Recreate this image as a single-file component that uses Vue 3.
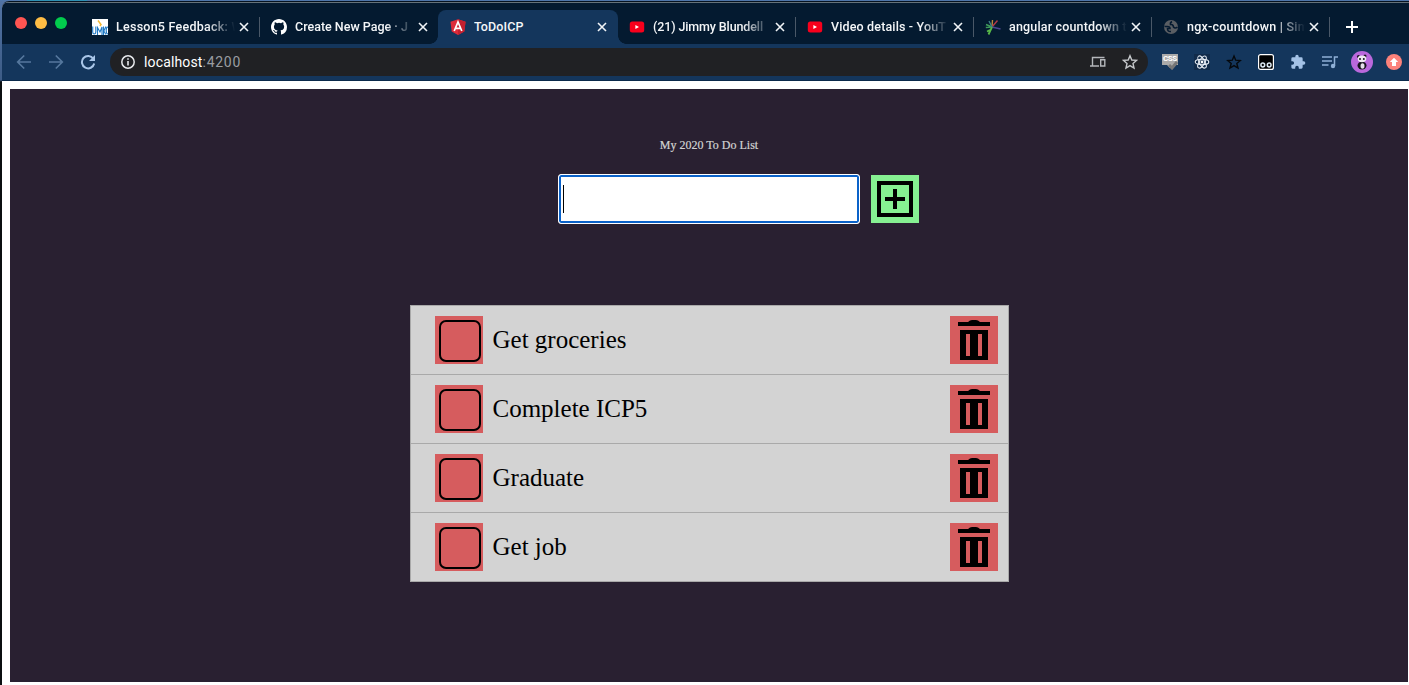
<script setup>
const tabs = [
  { id: 'umkc', title: 'Lesson5 Feedback: W', w: 179, track: 0.25 },
  { id: 'github', title: 'Create New Page · J', w: 178, track: 0 },
  { id: 'angular', title: 'ToDoICP', w: 180, track: 0.1, active: true },
  { id: 'youtube', title: '(21) Jimmy Blundell', w: 178, track: -0.12 },
  { id: 'youtube', title: 'Video details - YouT', w: 178, track: 0.15 },
  { id: 'burst', title: 'angular countdown t', w: 178, track: 0.17 },
  { id: 'globe', title: 'ngx-countdown | Sim', w: 178, track: 0.22 },
]
const items = ['Get groceries', 'Complete ICP5', 'Graduate', 'Get job']
</script>

<template>
  <div class="screen">
    <div class="desktop-edge"><i></i></div>
    <div class="window">
      <div class="tabstrip">
        <div class="lights"><i class="red"></i><i class="yellow"></i><i class="green"></i></div>
        <div v-for="(t, i) in tabs" :key="i" class="tab" :class="{ active: t.active, divided: !t.active && i !== 1 }" :style="{ width: t.w + 'px' }">
          <svg class="fav" width="16" height="16" viewBox="0 0 16 16">
            <g v-if="t.id === 'umkc'" fill="none">
              <path d="M0 0H16V16H0Z" fill="#fff" />
              <path d="M.7 7.500V13q0 2 1.500 2T3.800 13V7.500M5.500 16V8.500L8 13L10 8V16M11.500 7.500V16M14 7.500L11.800 12L14 15.500M16 8q-1.800 0-1.800 3.500t1.800 3.500" stroke="#1e78c4" stroke-width="1.100" />
              <path d="M6 1.500L9 5.500L8 7" stroke="#f2b632" stroke-width="1.500" />
            </g>
            <path v-else-if="t.id === 'github'" fill="#fff" d="M8 0C3.580 0 0 3.580 0 8c0 3.540 2.290 6.530 5.470 7.590.4.070.550-.170.550-.380v-1.490c-2.010.370-2.530-.490-2.690-.940-.090-.230-.480-.940-.820-1.130-.280-.150-.680-.520-.010-.530.630-.010 1.080.580 1.230.820.720 1.210 1.870.870 2.330.660.070-.520.280-.870.510-1.070-1.780-.2-3.640-.890-3.640-3.950 0-.870.310-1.590.820-2.150-.080-.2-.360-1.020.080-2.120 0 0 .670-.210 2.200.820a7.600 7.600 0 0 1 4 0c1.530-1.040 2.200-.820 2.200-.820.440 1.100.160 1.920.080 2.120.510.560.820 1.270.820 2.150 0 3.070-1.870 3.750-3.650 3.950.290.250.540.730.540 1.480v2.200c0 .210.150.460.550.380A8 8 0 0 0 16 8c0-4.420-3.580-8-8-8z" />
            <g v-else-if="t.id === 'angular'">
              <path d="M8 .2L15.500 2.800L14.300 12.500L8 16L1.700 12.500L.5 2.800Z" fill="#dd2b3a" />
              <path d="M8 .2L15.500 2.800L14.300 12.500L8 16Z" fill="#c3202f" />
              <path d="M4.200 12L8 3L11.800 12M5.500 9.300H10.500" fill="none" stroke="#fff" stroke-width="1.700" />
            </g>
            <g v-else-if="t.id === 'youtube'">
              <rect x=".8" y="2.500" width="14.400" height="11" rx="2.500" fill="#f8001c" />
              <path d="M6.400 6L10 8L6.400 10Z" fill="#fff" />
            </g>
            <g v-else-if="t.id === 'burst'" fill="none" stroke-width="1.400">
              <path d="M7 8L1 5.500M7 8L.8 8.500" stroke="#3f9c5a" />
              <path d="M7 8L7.500 1" stroke="#b8863a" />
              <path d="M7 8L12.500 1.500" stroke="#b53a48" />
              <path d="M7 8L15.500 10" stroke="#4b4590" />
              <path d="M7 8L3.500 15.500M5 11L2 12.500" stroke="#58b848" stroke-width="1.800" />
              <path d="M7 8L4 2" stroke="#3c7f86" />
            </g>
            <g v-else>
              <circle cx="8" cy="8" r="7" fill="#5a5e63" />
              <path d="M1.500 7.500H4.500Q7 7.500 7 9.500H4.500Q4.500 13 8 12.500M9 2.500Q7 3.500 7.500 5.500Q10 5 10.500 8Q12 10 14.500 8" fill="none" stroke="#051a30" stroke-width="1.600" />
            </g>
          </svg>
          <span class="title" :class="{ faded: !t.active }" :style="{ letterSpacing: t.track + 'px' }">{{ t.title }}</span>
          <svg class="close" width="10" height="10" viewBox="0 0 10 10"><path d="M1 1L9 9M9 1L1 9" stroke="#f1f4f7" stroke-width="1.600" /></svg>
        </div>
        <svg class="newtab" width="12" height="12" viewBox="0 0 12 12"><path d="M6 0V12M0 6H12" stroke="#fff" stroke-width="2" /></svg>
      </div>

      <div class="toolbar">
        <div class="nav">
          <svg width="16" height="16" viewBox="0 0 16 16" fill="none" stroke="#55779d" stroke-width="1.700"><path d="M15 8H2M8.200 1.500L1.700 8L8.200 14.500" /></svg>
          <svg width="16" height="16" viewBox="0 0 16 16" fill="none" stroke="#55779d" stroke-width="1.700"><path d="M1 8H14M7.800 1.500L14.300 8L7.800 14.500" /></svg>
          <svg width="16" height="16" viewBox="0 0 16 16"><path d="M13.300 4.700A6.200 6.200 0 1 0 14.200 9.500" fill="none" stroke="#a9c6e8" stroke-width="2" /><path d="M15 1V7H9Z" fill="#a9c6e8" /></svg>
        </div>
        <div class="omnibox">
          <svg width="14" height="14" viewBox="0 0 14 14"><circle cx="7" cy="7" r="6.200" fill="none" stroke="#e8eaed" stroke-width="1.500" /><path d="M7 6V10.500M7 3.200V4.800" stroke="#e8eaed" stroke-width="1.600" /></svg>
          <span class="url">localhost<em>:4200</em></span>
          <svg class="devices" width="16" height="12" viewBox="0 0 16 12" fill="none" stroke="#b4b7bb" stroke-width="1.400"><path d="M14.500 1.500H2.500V9.500M0 10H9M10.700 3.700H14.800V10H10.700Z" /></svg>
          <svg width="16" height="16" viewBox="0 0 16 16"><path d="M8 1.700L9.800 6L14.500 6.400L11 9.500L12 14L8 11.600L4 14L5 9.500L1.500 6.400L6.200 6Z" fill="none" stroke="#c4c7ca" stroke-width="1.400" /></svg>
        </div>
        <div class="exts">
          <div class="css"><svg width="16" height="16" viewBox="0 0 16 16"><path d="M0 0H16V11H13L8 14L5 11H0Z" fill="#aaa" /><path d="M7 11L10 14L15 8" fill="none" stroke="#777" stroke-width="3" /></svg><b>CSS</b></div>
          <svg width="16" height="16" viewBox="0 0 16 16"><path d="M0 0H16V16H0Z" fill="#112b4a" /><g fill="none" stroke="#e8eef5" stroke-width="1.100"><ellipse cx="8" cy="8" rx="6.800" ry="2.700" /><ellipse cx="8" cy="8" rx="6.800" ry="2.700" transform="rotate(60 8 8)" /><ellipse cx="8" cy="8" rx="6.800" ry="2.700" transform="rotate(120 8 8)" /></g><circle cx="8" cy="8" r="1.400" fill="#fff" /></svg>
          <svg width="16" height="16" viewBox="0 0 16 16"><path d="M8 2L9.700 6.200L14.300 6.600L10.800 9.500L12 14L8 11.600L4 14L5.200 9.500L1.700 6.600L6.300 6.200Z" fill="none" stroke="#05080c" stroke-width="1.400" /></svg>
          <svg width="16" height="16" viewBox="0 0 16 16"><rect x=".6" y=".6" width="14.800" height="14.800" rx="2" fill="#000" stroke="#fff" stroke-width="1.200" /><g fill="#000" stroke="#dce9f2" stroke-width="1.500"><circle cx="4.800" cy="11" r="1.900" /><circle cx="11.200" cy="11" r="1.900" /></g></svg>
          <svg width="16" height="16" viewBox="0 0 24 24"><path fill="#a4c2e6" d="M20.500 11H19V7a2 2 0 0 0-2-2h-4V3.500a2.500 2.500 0 0 0-5 0V5H4a2 2 0 0 0-2 2v3.800h1.500a2.700 2.700 0 0 1 0 5.400H2V20a2 2 0 0 0 2 2h3.800v-1.500a2.700 2.700 0 0 1 5.400 0V22H17a2 2 0 0 0 2-2v-4h1.500a2.500 2.500 0 0 0 0-5z" /></svg>
          <svg width="16" height="16" viewBox="0 0 16 16"><path d="M0 3H10M0 7H10M0 11H6.500M12.500 12V3H16" fill="none" stroke="#8fb0d6" stroke-width="1.500" /><circle cx="11" cy="12" r="2.200" fill="#8fb0d6" /></svg>
          <svg class="avatar" width="22" height="22" viewBox="0 0 22 22"><circle cx="11" cy="11" r="11" fill="#ba68dc" /><ellipse cx="11" cy="14.500" rx="4.500" ry="4" fill="#17131b" /><ellipse cx="11.500" cy="15" rx="2" ry="2.800" fill="#e6dfe9" /><circle cx="7.500" cy="5.500" r="1.500" fill="#17131b" /><circle cx="14" cy="5" r="1.500" fill="#17131b" /><ellipse cx="11" cy="7.800" rx="4.300" ry="3.400" fill="#f0eaf2" /><circle cx="9" cy="8" r="1" fill="#17131b" /><circle cx="12.800" cy="8" r="1" fill="#17131b" /></svg>
          <svg width="16" height="16" viewBox="0 0 16 16"><circle cx="8" cy="8" r="8" fill="#fc827b" /><path d="M8 3.700L12.200 8H10V12H6V8H3.800Z" fill="#fff" /></svg>
        </div>
      </div>

      <div class="viewport">
        <main class="page">
          <h1>My 2020 To Do List</h1>
          <div class="entry">
            <div class="field"><i></i></div>
            <div class="add"><svg width="48" height="48" viewBox="0 0 48 48"><path d="M8 8H40V40H8ZM24 14V34M14 24H34" fill="none" stroke="#000" stroke-width="4" /></svg></div>
          </div>
          <ul class="list">
            <li v-for="item in items" :key="item">
              <div class="btn"><svg width="48" height="48" viewBox="0 0 48 48"><rect x="5" y="5" width="40" height="40" rx="6" fill="none" stroke="#000" stroke-width="2" /></svg></div>
              <span>{{ item }}</span>
              <div class="btn"><svg width="48" height="48" viewBox="0 0 48 48"><path fill-rule="evenodd" d="M8 6H18Q20 4 22 4H26Q28 4 30 6H40V10H8ZM10 14H38V44H10ZM16 18V40H20V18ZM28 18V40H32V18Z" /></svg></div>
            </li>
          </ul>
        </main>
      </div>
    </div>
  </div>
</template>

<style>
body { overflow: hidden; background: #0b0e10; }
</style>

<style scoped>
* { box-sizing: border-box; }
svg { display: block; flex: none; }
.screen { width: 1409px; height: 685px; overflow: hidden; background: linear-gradient(#5273a4 0, #3d5c86 80px, #0b0e10 82px); font-family: Roboto, sans-serif; }
.desktop-edge { height: 1px; background: #4f76aa; }
.desktop-edge i { display: block; height: 1px; width: 60px; margin-left: 27px; background: #2f91b4; }
.window { margin-left: 2px; height: 684px; border-top: 1px solid #061321; border-radius: 7px 0 0 0; overflow: hidden; background: #fff; }
.tabstrip { height: 42px; display: flex; align-items: flex-end; background: #041a30; border-top: 1px solid #65727a; }
.lights { width: 79px; height: 41px; padding: 14px 0 0 13px; display: flex; gap: 8px; }
.lights i { width: 12px; height: 12px; border-radius: 50%; }
.red { background: #ff5552; }
.yellow { background: #ffbd45; }
.green { background: #02cc4d; }
.tab { position: relative; height: 34px; flex: none; display: flex; align-items: center; padding: 0 11px; color: #f4f6f8; }
.tab:nth-child(3) { padding-right: 10px; }
.tab.divided::after { content: ''; width: 1px; height: 20px; background: #4a5868; position: absolute; right: 0; top: 7px; }
.tab.active { background: #14365c; border-radius: 8px 8px 0 0; padding-left: 12px; }
.tab.active::before, .tab.active::after { content: ''; position: absolute; bottom: 0; width: 8px; height: 8px; }
.tab.active::before { left: -8px; background: radial-gradient(circle at 0 0, #041a30 7.5px, #14365c 8px); }
.tab.active::after { right: -8px; background: radial-gradient(circle at 100% 0, #041a30 7.5px, #14365c 8px); }
.fav { margin-right: 8px; }
.title { flex: 1; overflow: hidden; white-space: nowrap; font-size: 12.5px; line-height: 16px; font-weight: 500; }
.title.faded { -webkit-mask-image: linear-gradient(90deg, #000 calc(100% - 29px), transparent calc(100% - 1px)); mask-image: linear-gradient(90deg, #000 calc(100% - 29px), transparent calc(100% - 1px)); }
.close { margin-left: 3px; }
.newtab { margin: 0 0 11px 16px; }
.toolbar { height: 37px; display: flex; align-items: center; background: #14365c; border-bottom: 1px solid #0a294b; }
.nav { display: flex; gap: 16px; width: 108px; padding-left: 14px; }
.omnibox { width: 1038px; height: 28px; border-radius: 14px; background: #202124; display: flex; align-items: center; padding: 0 10px 0 11px; }
.url { flex: 1; margin-left: 9px; font-size: 14px; line-height: 18px; color: #fff; letter-spacing: .15px; }
.url em { font-style: normal; color: #9a9da1; letter-spacing: .7px; }
.devices { margin-right: 16px; }
.exts { display: flex; align-items: center; gap: 16px; margin-left: 14px; }
.avatar { margin: 0 -3px; }
.css { position: relative; width: 16px; height: 16px; }
.css b { position: absolute; left: 1px; top: 0; font: 700 8px/10px Roboto, sans-serif; letter-spacing: -.4px; color: #fff; }
.viewport { background: #fff; padding: 8px 1px 3px 8px; }
.page { height: 593px; background: #292031; padding-top: 47px; display: flex; flex-direction: column; align-items: center; font-family: "Liberation Serif", serif; }
h1 { margin: 0; font-size: 12px; line-height: 18px; font-weight: 400; color: #d3d3d3; -webkit-text-stroke: .2px #d3d3d3; }
.entry { display: flex; margin: 20px 0 0 58px; width: 361px; gap: 11px; align-items: center; }
.field { width: 302px; height: 50px; flex: none; border: 1px solid #fff; border-radius: 3px; background: #fff; box-shadow: inset 0 0 0 2px #0a62c9; padding: 10px 4px; }
.field i { display: block; width: 1px; height: 28px; background: #000; }
.add { width: 48px; height: 48px; background: #86f092; }
.list { list-style: none; width: 599px; margin: 81px 0 0; padding: 0; border: 1px solid #a9a9a9; background: #d3d3d3; color: #000; }
li { height: 69px; display: flex; align-items: center; padding: 0 10px 0 24px; border-bottom: 1px solid #a9a9a9; font-size: 25px; }
li:last-child { height: 68px; border-bottom: 0; }
li span { flex: 1; margin-left: 10px; line-height: 30px; }
.btn { width: 48px; height: 48px; background: #d65c5e; }
</style>
